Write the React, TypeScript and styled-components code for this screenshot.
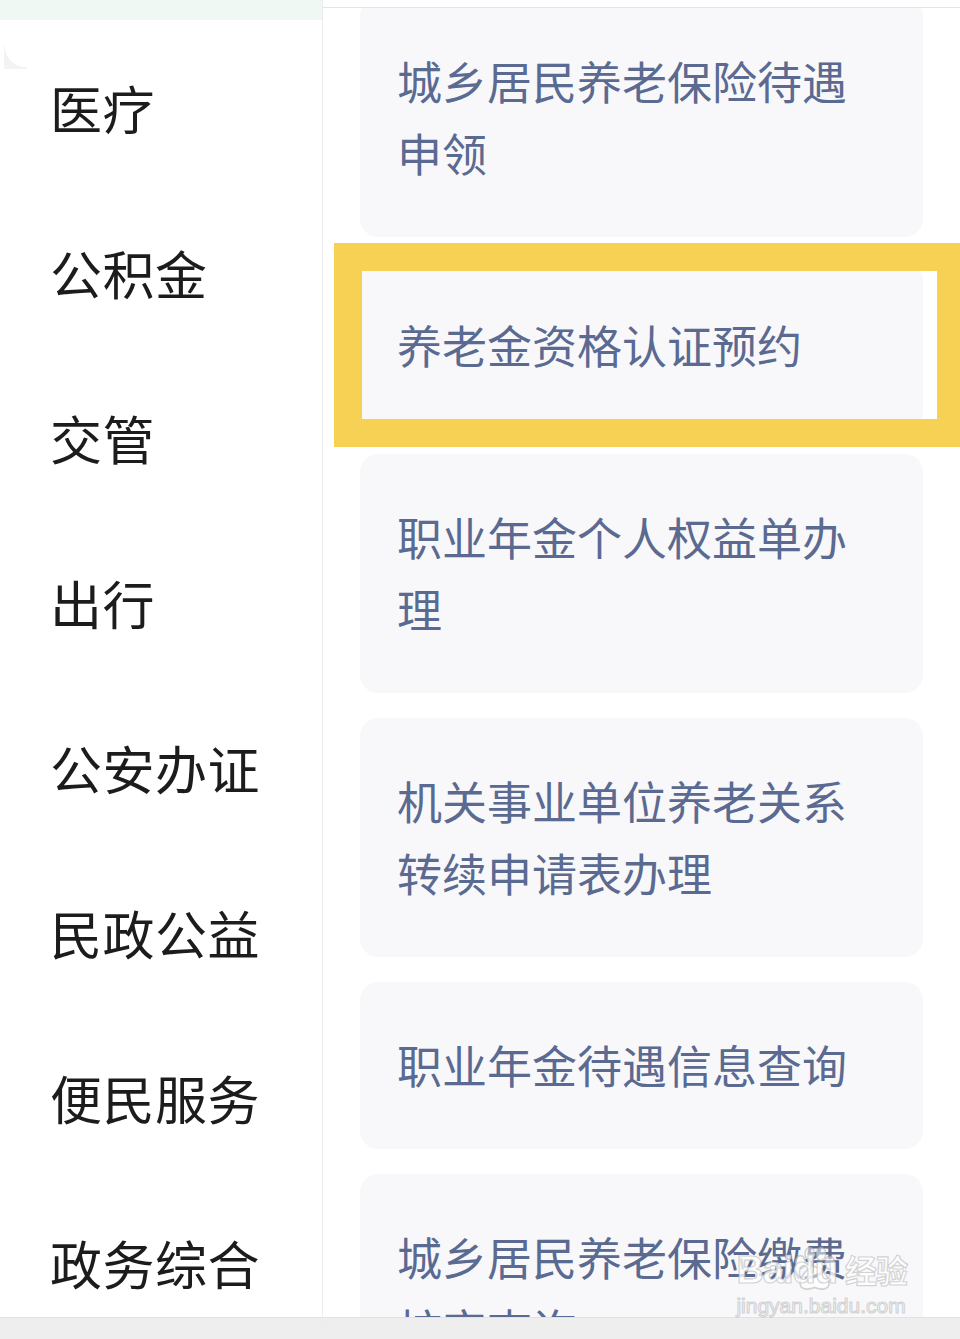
import React from 'react'
import styled, { createGlobalStyle } from 'styled-components'

const GlobalStyle = createGlobalStyle`
    html, body {
        margin: 0;
        padding: 0;
        background: #ffffff;
    }
    body {
        font-family: "Noto Sans CJK SC", "Noto Sans", sans-serif;
    }
`

interface Service {
    name: string,
    highlighted?: boolean,
}

const categories: string[] = ['医疗', '公积金', '交管', '出行', '公安办证', '民政公益', '便民服务', '政务综合']

const services: Service[] = [
    {name: '城乡居民养老保险待遇申领'},
    {name: '养老金资格认证预约', highlighted: true},
    {name: '职业年金个人权益单办理'},
    {name: '机关事业单位养老关系转续申请表办理'},
    {name: '职业年金待遇信息查询'},
    {name: '城乡居民养老保险缴费核定查询'},
]

const Paw = () => (
    <PawSvg viewBox="0 0 60 60" width="60" height="60">
        <ellipse cx="14" cy="20" rx="6" ry="8" />
        <ellipse cx="26" cy="10" rx="6" ry="8" />
        <ellipse cx="40" cy="10" rx="6" ry="8" />
        <ellipse cx="51" cy="21" rx="6" ry="8" />
        <path d="M32 26 C22 26 14 40 14 47 C14 55 24 55 32 52 C40 55 50 55 50 47 C50 40 42 26 32 26 Z" />
    </PawSvg>
)

const App: React.FC = () => {
    return (
        <Page>
            <GlobalStyle />
            <Main>
                <Sidebar>
                    <SidebarTop />
                    <CornerMark />
                    <CategoryList>
                        {categories.map(c => (
                            <CategoryItem key={c}>{c}</CategoryItem>
                        ))}
                    </CategoryList>
                </Sidebar>
                <Content>
                    <ContentTop />
                    <CardViewport>
                        <CardList>
                            {services.map(s => (
                                <Card key={s.name}>
                                    {s.name}
                                    {s.highlighted && <HighlightFrame />}
                                </Card>
                            ))}
                        </CardList>
                    </CardViewport>
                </Content>
            </Main>
            <BottomBar />
            <Watermark>
                <WatermarkLogo>
                    Bai<PawWord><Paw />du</PawWord><LogoCn>经验</LogoCn>
                </WatermarkLogo>
                <WatermarkUrl>jingyan.baidu.com</WatermarkUrl>
            </Watermark>
        </Page>
    )
}

export default App

const Page = styled.div`
    position: relative;
    width: 960px;
    height: 1339px;
    display: flex;
    flex-direction: column;
    overflow: hidden;
    background: #ffffff;
`

const Main = styled.div`
    flex: 1;
    display: flex;
    min-height: 0;
`

const Sidebar = styled.div`
    position: relative;
    width: 322px;
    flex-shrink: 0;
    border-right: 1px solid #ececec;
    display: flex;
    flex-direction: column;
    overflow: hidden;
    margin-bottom: -9px;
    z-index: 1;
`

const SidebarTop = styled.div`
    height: 20px;
    background: #f0f8f3;
    flex-shrink: 0;
`

const CornerMark = styled.div`
    position: absolute;
    left: 4px;
    top: 45px;
    width: 23px;
    height: 24px;
    background: radial-gradient(circle at 100% 0, transparent 22px, #f3f3f3 23px);
`

const CategoryList = styled.div`
    display: flex;
    flex-direction: column;
    padding-top: 5px;
`

const CategoryItem = styled.div`
    height: 165px;
    flex-shrink: 0;
    display: flex;
    align-items: center;
    padding-left: 50px;
    font-size: 52px;
    color: #1c1c1c;
    letter-spacing: 0.5px;
`

const Content = styled.div`
    flex: 1;
    display: flex;
    flex-direction: column;
    min-width: 0;
`

const ContentTop = styled.div`
    height: 7px;
    flex-shrink: 0;
    border-bottom: 1px solid #e4e4e4;
`

const CardViewport = styled.div`
    flex: 1;
    overflow: hidden;
    padding-bottom: 7px;
`

const CardList = styled.div`
    display: flex;
    flex-direction: column;
    gap: 25px;
    margin-top: -10px;
    padding: 0 37px;
`

const Card = styled.div`
    position: relative;
    background: #f8f8fb;
    border-radius: 18px;
    padding: 47px 60px 48px 37px;
    font-size: 45px;
    line-height: 72px;
    color: #5a6a91;
`

const HighlightFrame = styled.div`
    position: absolute;
    top: -19px;
    bottom: -18px;
    left: -26px;
    right: -37px;
    border: 28px solid #f7d154;
    border-right-width: 23px;
    pointer-events: none;
`

const Watermark = styled.div`
    position: absolute;
    right: 53px;
    bottom: 21px;
    display: flex;
    flex-direction: column;
    align-items: flex-start;
    color: rgba(255, 255, 255, 0.8);
    -webkit-text-stroke: 1.2px rgba(170, 170, 170, 0.5);
    font-family: "Liberation Sans", "Noto Sans CJK SC", sans-serif;
    z-index: 2;
`

const WatermarkLogo = styled.div`
    display: flex;
    align-items: baseline;
    font-size: 38px;
    font-weight: bold;
    line-height: 44px;
    letter-spacing: -1px;
`

const PawWord = styled.span`
    position: relative;
    display: inline-block;
`

const PawSvg = styled.svg`
    position: absolute;
    left: -5px;
    top: -2px;
    width: 50px;
    height: 48px;
    fill: rgba(255, 255, 255, 0.5);
    stroke: rgba(170, 170, 170, 0.5);
    stroke-width: 2;
    z-index: -1;
`

const LogoCn = styled.span`
    margin-left: 8px;
    font-size: 32px;
    font-family: "Noto Sans CJK SC", sans-serif;
    font-weight: bold;
`

const WatermarkUrl = styled.div`
    font-size: 21px;
    line-height: 24px;
    margin-top: 2px;
`

const BottomBar = styled.div`
    height: 21px;
    flex-shrink: 0;
    background: #eeeeee;
    border-top: 1px solid #e2e2e2;
`
